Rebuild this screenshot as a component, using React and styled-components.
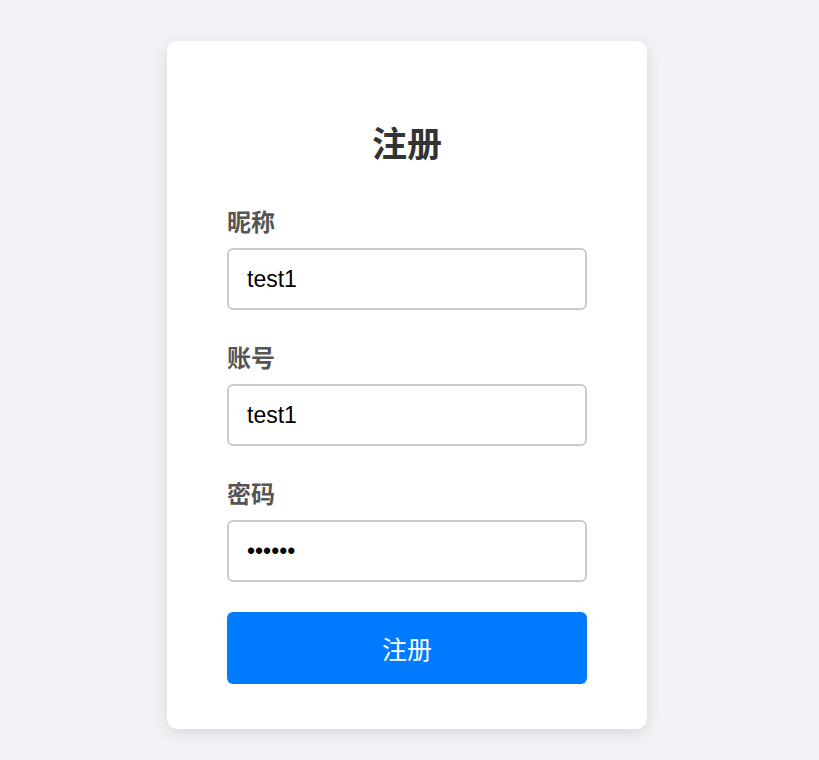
import React from "react";
import styled, { createGlobalStyle } from "styled-components";

const GlobalStyle = createGlobalStyle`
  html, body {
    margin: 0;
    padding: 0;
    background: #f0f2f5;
    font-family: "Liberation Sans", Arial, "Noto Sans CJK SC", sans-serif;
  }
`;

const Page = styled.div`
  display: flex;
  justify-content: center;
  align-items: flex-start;
  padding: 41px 5px 0 0;
  min-height: 760px;
  box-sizing: border-box;
`;

const Card = styled.form`
  width: 480px;
  box-sizing: border-box;
  padding: 84px 60px 45px;
  background: #fff;
  border-radius: 10px;
  box-shadow: 0 4px 14px rgba(0, 0, 0, 0.1);
  display: flex;
  flex-direction: column;
`;

const Title = styled.h2`
  margin: 0 0 43px;
  font-size: 35px;
  line-height: 40px;
  font-weight: 700;
  color: #333;
  text-align: center;
`;

const Field = styled.div`
  display: flex;
  flex-direction: column;
  gap: 10px;
  margin-bottom: 34px;
`;

const Label = styled.label`
  font-size: 24px;
  line-height: 30px;
  font-weight: 700;
  color: #555;
`;

const Input = styled.input`
  height: 62px;
  box-sizing: border-box;
  padding: 0 18px;
  border: 2px solid #ccc;
  border-radius: 6px;
  font-family: "Liberation Sans", Arial, sans-serif;
  font-size: 23px;
  color: #000;
  outline: none;
`;

const Button = styled.button`
  height: 72px;
  margin-top: -4px;
  border: none;
  border-radius: 6px;
  background: #007bff;
  color: #fff;
  font-family: "Liberation Sans", Arial, "Noto Sans CJK SC", sans-serif;
  font-size: 25px;
  cursor: pointer;
`;

const fields = [
  { id: "nickname", label: "昵称", type: "text", value: "test1" },
  { id: "account", label: "账号", type: "text", value: "test1" },
  { id: "password", label: "密码", type: "password", value: "123456" },
];

export default function App() {
  return (
    <>
      <GlobalStyle />
      <Page>
        <Card onSubmit={e => e.preventDefault()}>
          <Title>注册</Title>
          {fields.map(f => (
            <Field key={f.id}>
              <Label htmlFor={f.id}>{f.label}</Label>
              <Input id={f.id} type={f.type} defaultValue={f.value} />
            </Field>
          ))}
          <Button type="submit">注册</Button>
        </Card>
      </Page>
    </>
  );
}
